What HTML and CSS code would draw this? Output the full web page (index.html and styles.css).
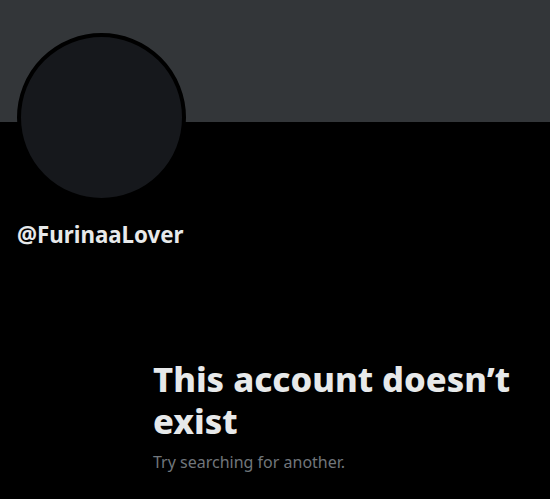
FILE: index.html
```html
<!DOCTYPE html>
<html lang="en">
<head>
    <meta charset="UTF-8">
    <meta name="viewport" content="width=device-width, initial-scale=1.0">
    <title>Profile / X</title>
    <link rel="stylesheet" href="styles.css">
</head>
<body>
    <div class="banner"></div>
    <div class="profile">
        <div class="avatar"></div>
        <div class="handle">@FurinaaLover</div>
    </div>
    <div class="empty-state">
        <h1>This account doesn’t exist</h1>
        <p>Try searching for another.</p>
    </div>
</body>
</html>
```

FILE: styles.css
```css
body {
    margin: 0;
    background-color: #000000;
    color: #e7e9ea;
    font-family: "Noto Sans", "Open Sans", sans-serif;
    overflow: hidden;
}
.banner {
    height: 122px;
    background-color: #333639;
}
.profile {
    padding: 0 17px;
}
.avatar {
    width: 161px;
    height: 161px;
    margin-top: -89px;
    border: 4px solid #000000;
    border-radius: 50%;
    background-color: #16181c;
}
.handle {
    margin-top: 20px;
    font-size: 22.3px;
    font-weight: 700;
    line-height: 26px;
}
.empty-state {
    margin: 110px 0 0 153px;
    width: 380px;
}
.empty-state h1 {
    margin: 0;
    font-size: 34.5px;
    font-weight: 800;
    line-height: 42px;
}
.empty-state p {
    margin: 10px 0 0;
    font-size: 16px;
    line-height: 20px;
    color: #71767b;
}
```
